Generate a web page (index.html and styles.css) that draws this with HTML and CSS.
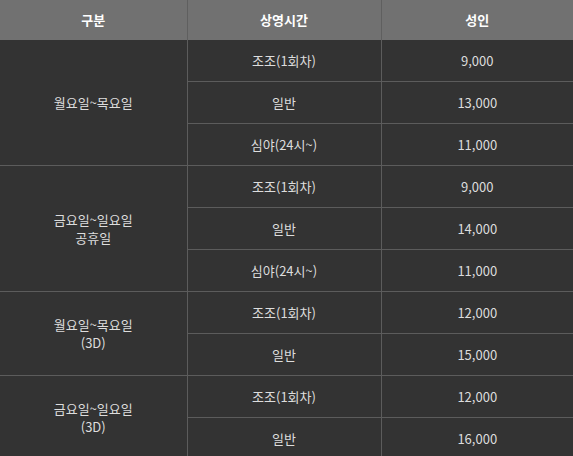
FILE: index.html
```html
<!DOCTYPE html>
<html lang="ko">
<head>
<meta charset="utf-8">
<link rel="stylesheet" href="styles.css">
</head>
<body>
<table class="price">
  <colgroup>
    <col class="c1"><col class="c2"><col class="c3">
  </colgroup>
  <thead>
    <tr><th>구분</th><th>상영시간</th><th>성인</th></tr>
  </thead>
  <tbody>
    <tr><td rowspan="3" class="day">월요일~목요일</td><td>조조(1회차)</td><td>9,000</td></tr>
    <tr><td>일반</td><td>13,000</td></tr>
    <tr><td>심야(24시~)</td><td>11,000</td></tr>
    <tr><td rowspan="3" class="day">금요일~일요일<br>공휴일</td><td>조조(1회차)</td><td>9,000</td></tr>
    <tr><td>일반</td><td>14,000</td></tr>
    <tr><td>심야(24시~)</td><td>11,000</td></tr>
    <tr><td rowspan="2" class="day">월요일~목요일<br>(3D)</td><td>조조(1회차)</td><td>12,000</td></tr>
    <tr><td>일반</td><td>15,000</td></tr>
    <tr><td rowspan="2" class="day">금요일~일요일<br>(3D)</td><td>조조(1회차)</td><td>12,000</td></tr>
    <tr><td>일반</td><td>16,000</td></tr>
  </tbody>
</table>
</body>
</html>
```

FILE: styles.css
```css
html, body {
  margin: 0;
  padding: 0;
  background: #333333;
}
.price {
  width: 573px;
  border-collapse: collapse;
  table-layout: fixed;
  font-family: "Noto Sans CJK KR", "Noto Sans", sans-serif;
  font-size: 13px;
  line-height: 18px;
  color: #dddddd;
}
.c1 { width: 187px; }
.c2 { width: 194px; }
.c3 { width: 192px; }
.price th {
  height: 40px;
  padding: 0;
  background: #717171;
  color: #ffffff;
  font-weight: bold;
  text-align: center;
  border-left: 1px solid #5f5f5f;
  box-sizing: border-box;
}
.price th:first-child { border-left: none; }
.price td {
  height: 41px;
  padding: 0;
  text-align: center;
  vertical-align: middle;
  border-left: 1px solid #5c5c5c;
  border-top: 1px solid #5c5c5c;
}
.price td.day { border-left: none; }
.price tbody tr:first-child td { border-top: none; }
```
